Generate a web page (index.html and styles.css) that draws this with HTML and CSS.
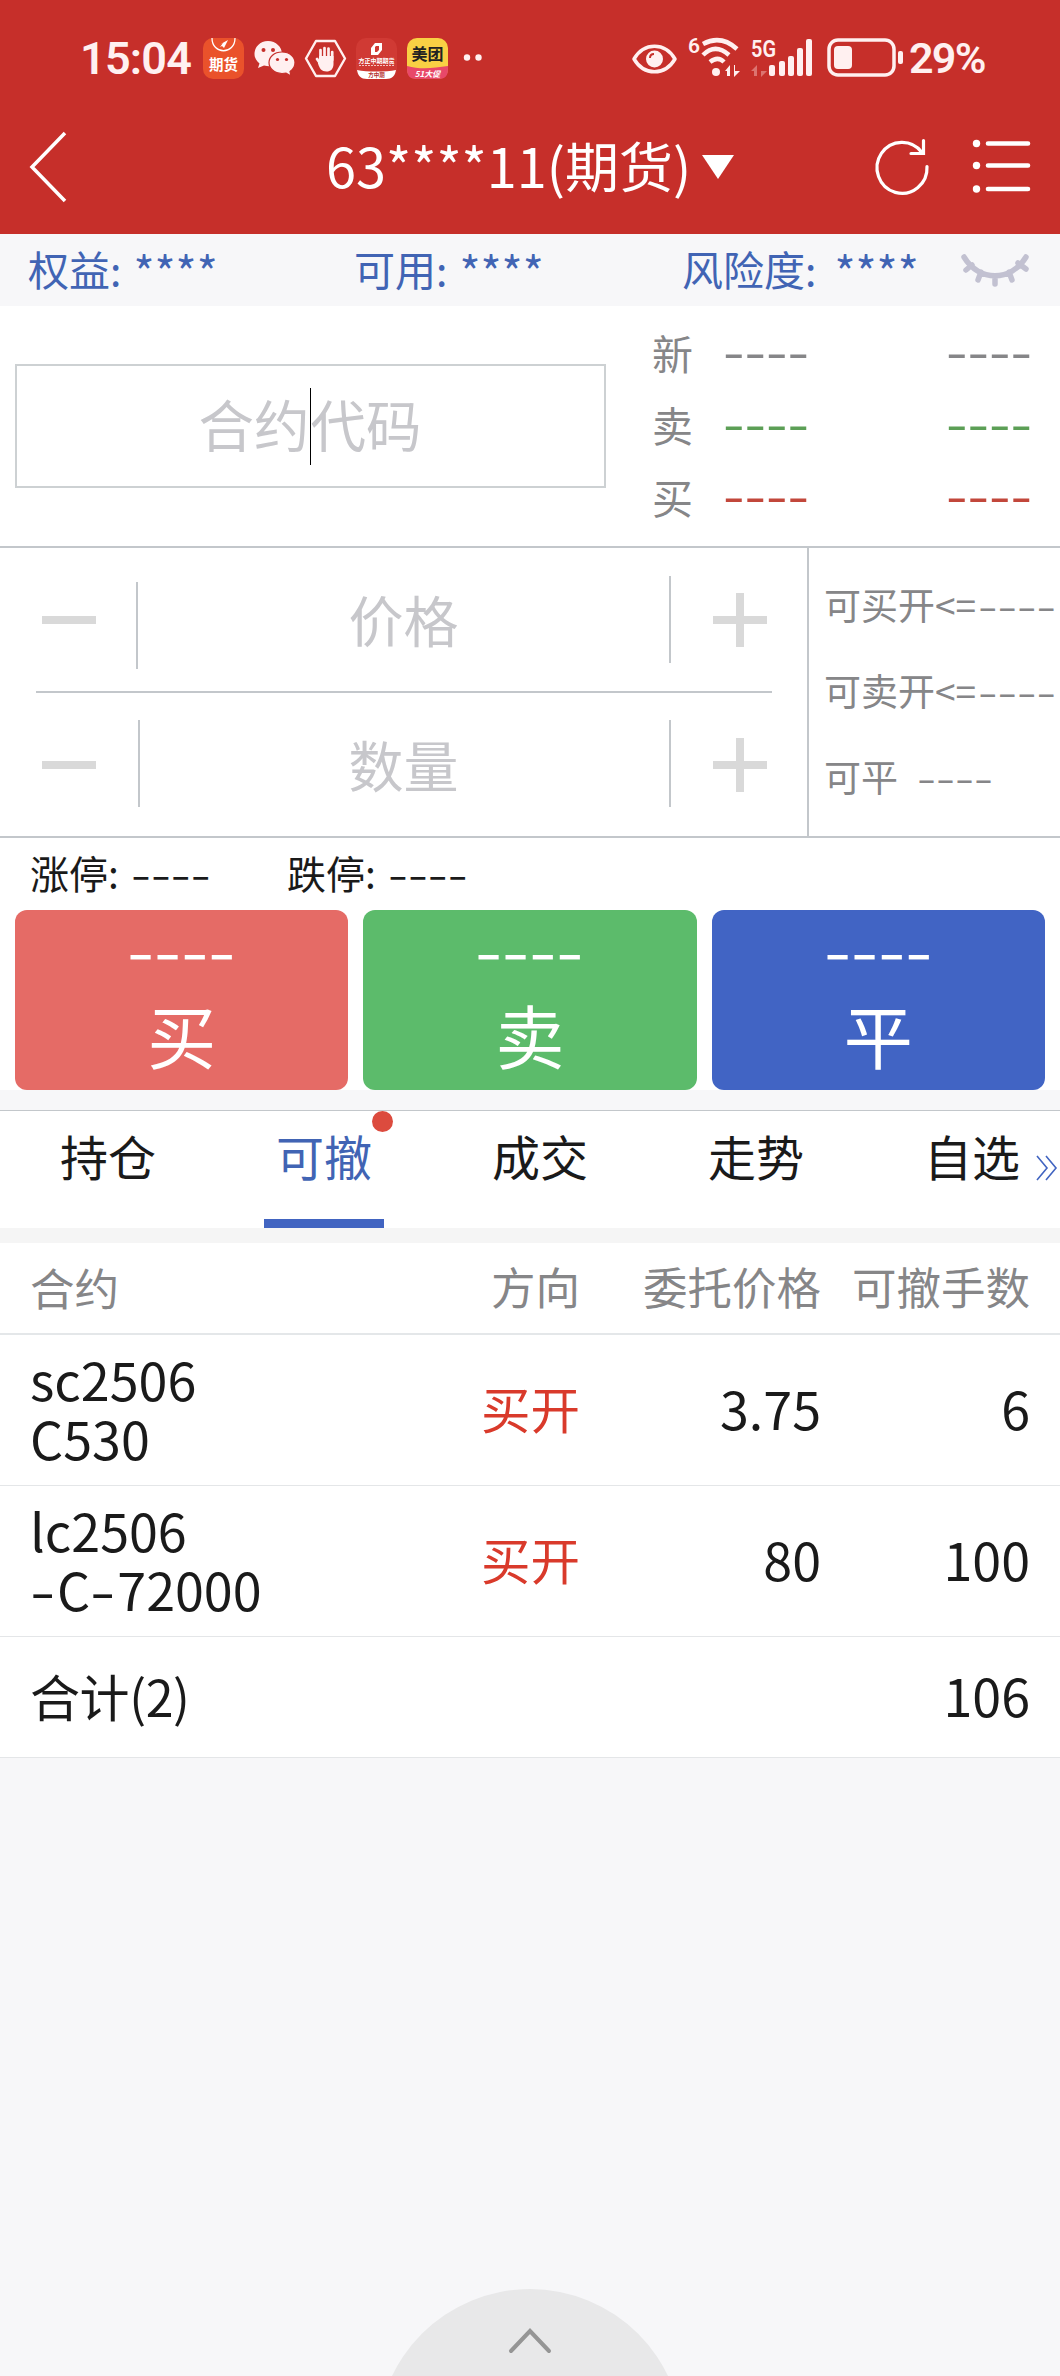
FILE: index.html
```html
<!DOCTYPE html>
<html lang="zh-CN">

<head>
    <meta charset="UTF-8">
    <meta name="viewport" content="width=device-width, initial-scale=1.0">
    <title>期货交易</title>
    <link rel="stylesheet" href="styles.css">
</head>

<body>
    <header class="header">
        <div class="status">
            <span class="status-time">15:04</span>
            <div class="status-apps">
                <svg width="41" height="41" viewBox="0 0 41 41">
                    <rect width="41" height="41" rx="10" fill="#ea522b"/>
                    <path d="M9 0C9 17 32 17 32 0" fill="none" stroke="#fff" stroke-width="1.3"/>
                    <path d="M16 7l9-5-4 8-2-2-2 1 3-4z" fill="#fff"/>
                    <text x="20.5" y="32" font-size="14.5" font-weight="700" fill="#fff" text-anchor="middle">期货</text>
                </svg>
                <svg width="41" height="41" viewBox="0 0 41 41">
                    <path d="M14 3C6 3 .5 9 .5 16c0 4 2 7 5 9.500L4 30l6-2.500c12 3 18-4 18-11.500C28 9 22 3 14 3z" fill="#fff0f0"/>
                    <path d="M28 14c-8 0-13 5-13 10.500S20 35.500 28 35.500l4-.5 5 3-1-4.500c3-2 5-5 5-9C41 19 36 14 28 14z" fill="#fff0f0" stroke="#c62f2a" stroke-width="1.200"/>
                    <g fill="#c62f2a">
                        <circle cx="9.500" cy="12" r="2"/>
                        <circle cx="19" cy="12" r="2"/>
                        <circle cx="23.500" cy="21.500" r="1.600"/>
                        <circle cx="32.500" cy="21.500" r="1.600"/>
                    </g>
                </svg>
                <svg width="41" height="41" viewBox="0 0 41 41">
                    <path d="M1 20.500L11 3h19l10 17.500L30 38H11z" fill="none" stroke="#fff0f0" stroke-width="2.400" stroke-linejoin="round"/>
                    <path d="M15.500 22V12M19.500 20V10M23.500 20V10.500M27.200 22V14M15.500 26l-3.500-5" fill="none" stroke="#fff0f0" stroke-width="2.700" stroke-linecap="round"/>
                    <path d="M14.200 18h14.300v8c0 5-3 7.500-7 7.500-5 0-7-3-8.500-8z" fill="#fff0f0"/>
                </svg>
                <svg width="41" height="41" viewBox="0 0 41 41">
                    <rect width="41" height="41" rx="10" fill="#d03a34"/>
                    <path d="M1 32c10 2 29 2 39 0-1 6-4 9-10 9H11c-6 0-9-3-10-9z" fill="#fff"/>
                    <path d="M15 10l4-5h7v7l-4 5h-7zM19 9v5h2l2-2V8h-3z" fill="#fff" fill-rule="evenodd"/>
                    <text x="20.500" y="25" font-size="6" font-weight="700" fill="#fff" text-anchor="middle">方正中期期货</text>
                    <path d="M3 27.500h35" stroke="#f3c4c0" stroke-width="1" stroke-dasharray="2 1"/>
                    <text x="20.500" y="38.500" font-size="5.500" font-weight="700" fill="#b3302b" text-anchor="middle">方中期</text>
                </svg>
                <svg width="41" height="41" viewBox="0 0 41 41">
                    <rect width="41" height="41" rx="10" fill="#f9d044"/>
                    <path d="M0 28c14 4 27 2 41 0v3c0 7-3 10-10 10H10C3 41 0 38 0 31z" fill="#e84869"/>
                    <text x="20.500" y="22" font-size="16" font-weight="700" fill="#222" text-anchor="middle">美团</text>
                    <text x="20.500" y="38.500" font-size="8" font-weight="700" font-style="italic" fill="#fff" text-anchor="middle">51大促</text>
                </svg>
            </div>
            <svg class="status-more" width="20" height="8" viewBox="0 0 20 8">
                <circle cx="4" cy="3.500" r="3.200" fill="#fff0f0"/>
                <circle cx="15.500" cy="3.500" r="3.200" fill="#fff0f0"/>
            </svg>
            <svg class="status-system" width="276" height="44" viewBox="630 36 276 44">
                <g fill="none" stroke="#fff0f0">
                    <path d="M634 59c10-17 31-17 41 0-10 17-31 17-41 0z" stroke-width="3.500" stroke-linejoin="round"/>
                    <path d="M703 44c11-6 23-5 34 5M703 55c8-8 17-8 26 0M710 62c5-4 10-4 14 0" stroke-width="4.500"/>
                    <rect x="829" y="40" width="65" height="35" rx="9" stroke-width="3.500"/>
                </g>
                <g fill="#fff0f0">
                    <circle cx="654.500" cy="59" r="8.500"/>
                    <circle cx="716" cy="72" r="4"/>
                    <path d="M725 71l5-6v11h-3v-5zM735 65v6h5l-6 6V65z"/>
                    <rect x="769" y="65" width="6" height="11" rx="2"/>
                    <rect x="779" y="61" width="6" height="15" rx="2"/>
                    <rect x="788" y="56" width="6" height="20" rx="2"/>
                    <rect x="797" y="48" width="6" height="28" rx="2"/>
                    <rect x="806" y="39" width="6" height="37" rx="2"/>
                    <rect x="834" y="46" width="18" height="23" rx="4"/>
                    <rect x="898" y="51" width="5" height="13" rx="2"/>
                </g>
                <path d="M751 71l6-6v11h-3v-5zM761 65v6h6l-6 6z" fill="#dc7470"/>
                <path d="M650 58c0-3 2-4 4-4" fill="none" stroke="#c62f2a" stroke-width="2"/>
                <text class="latin" x="688" y="53" font-size="21" fill="#fff0f0">6</text>
                <text class="latin" x="751" y="57" font-size="24" textLength="25" lengthAdjust="spacingAndGlyphs" fill="#fff0f0">5G</text>
            </svg>
            <span class="status-percent">29%</span>
        </div>
        <div class="nav">
            <svg class="nav-back" width="40" height="74" viewBox="0 0 40 74">
                <path d="M37 3L4 37l33 34" fill="none" stroke="#fff" stroke-width="3.500"/>
            </svg>
            <h1 class="nav-title">63****11(期货)</h1>
            <span class="nav-arrow"></span>
            <svg class="nav-icons" width="160" height="60" viewBox="874 137 160 60">
                <g fill="none" stroke="#fff" stroke-linecap="round">
                    <path d="M927 166.500a25 25.500 0 1 1-5-14" stroke-width="3.200"/>
                    <path d="M923.500 140.500v13H911" stroke-width="3.200"/>
                    <path d="M988 143.500h40M988 165.500h40M988 189h40" stroke-width="4.600"/>
                </g>
                <circle cx="976.500" cy="143.500" r="3.700" fill="#fff"/>
                <circle cx="976.500" cy="165.500" r="3.700" fill="#fff"/>
                <circle cx="976.500" cy="189" r="3.700" fill="#fff"/>
            </svg>
        </div>
    </header>

    <div class="summary">
        <div class="summary-item">权益: <span class="stars">****</span></div>
        <div class="summary-item">可用: <span class="stars">****</span></div>
        <div class="summary-item">风险度: <span class="stars">****</span></div>
        <svg class="summary-eye" width="70" height="36" viewBox="960 252 70 36">
            <path d="M964 257c15 25 47 25 62 0M972 265l-6 5M981 272l-3 8M995 276v8M1009 272l3 8M1018 263l8 6" fill="none" stroke="#c2c1d1" stroke-width="5.500" stroke-linecap="round"/>
        </svg>
    </div>

    <section class="contract">
        <div class="code-input"><span>合约</span><i class="caret"></i><span>代码</span></div>
        <div class="quotes">
            <div class="quote">
                <span>新</span>
                <span class="dash">----</span>
                <span class="dash">----</span>
            </div>
            <div class="quote quote-sell">
                <span>卖</span>
                <span class="dash">----</span>
                <span class="dash">----</span>
            </div>
            <div class="quote quote-buy">
                <span>买</span>
                <span class="dash">----</span>
                <span class="dash">----</span>
            </div>
        </div>
    </section>

    <section class="order">
        <div class="steppers">
            <div class="stepper stepper-price">
                <div class="minus"></div>
                <div class="field">价格</div>
                <div class="plus"></div>
            </div>
            <div class="stepper stepper-amount">
                <div class="minus"></div>
                <div class="field">数量</div>
                <div class="plus"></div>
            </div>
        </div>
        <div class="limits">
            <div>可买开&lt;=<span class="dash">----</span></div>
            <div>可卖开&lt;=<span class="dash">----</span></div>
            <div>可平<span class="dash dash-gap">----</span></div>
        </div>
    </section>

    <section class="trade">
        <div class="stops">
            <div class="stop">涨停: <span class="dash">----</span></div>
            <div class="stop">跌停: <span class="dash">----</span></div>
        </div>
        <div class="buttons">
            <div class="button button-buy"><span class="dash">----</span><b>买</b></div>
            <div class="button button-sell"><span class="dash">----</span><b>卖</b></div>
            <div class="button button-close"><span class="dash">----</span><b>平</b></div>
        </div>
    </section>

    <nav class="tabs">
        <div class="tab">持仓</div>
        <div class="tab tab-active">可撤<i class="dot"></i></div>
        <div class="tab">成交</div>
        <div class="tab">走势</div>
        <div class="tab">自选</div>
        <svg class="tabs-more" width="24" height="28" viewBox="0 0 24 28">
            <path d="M2 2l10 12L2 26M11 2l10 12-10 12" fill="none" stroke="#4164c1" stroke-width="1.600"/>
        </svg>
    </nav>

    <div class="table">
        <div class="row row-head">
            <div class="col-name">合约</div>
            <div class="col-side">方向</div>
            <div class="col-price">委托价格</div>
            <div class="col-amount">可撤手数</div>
        </div>
        <div class="row">
            <div class="col-name">sc2506<br>C530</div>
            <div class="col-side">买开</div>
            <div class="col-price">3.75</div>
            <div class="col-amount">6</div>
        </div>
        <div class="row">
            <div class="col-name">lc2506<br><span class="dash">-</span>C<span class="dash">-</span>72000</div>
            <div class="col-side">买开</div>
            <div class="col-price">80</div>
            <div class="col-amount">100</div>
        </div>
        <div class="row row-total">
            <div class="col-name">合计(2)</div>
            <div class="col-amount">106</div>
        </div>
    </div>

    <footer class="footer">
        <div class="drawer">
            <svg width="44" height="28" viewBox="0 0 44 28">
                <path d="M3 24L22 4l19 20" fill="none" stroke="#959595" stroke-width="4" stroke-linecap="round"/>
            </svg>
        </div>
    </footer>
</body>

</html>
```

FILE: styles.css
```css
* {
    box-sizing: border-box;
}

body {
    margin: 0;
    width: 1060px;
    height: 2376px;
    display: flex;
    flex-direction: column;
    overflow: hidden;
    background-color: #f7f7f9;
    color: #1a1a1a;
    font-family: "Noto Sans CJK SC", sans-serif;
    line-height: 1;
    white-space: nowrap;
}

svg {
    display: block;
    flex-shrink: 0;
    overflow: visible;
}

/* wide hyphens used as the empty value */
.dash {
    display: inline-block;
    transform: scaleX(1.5);
    transform-origin: left;
}

/* header */
.header {
    height: 234px;
    background-color: #c62f2a;
    color: white;
}

.status {
    height: 116px;
    padding-left: 80px;
    display: flex;
    align-items: center;
    color: #fff0f0;
}

.status-time,
.status-percent,
.latin {
    font-family: Roboto, sans-serif;
    font-weight: 600;
}

.status-time {
    width: 123px;
    font-size: 45px;
    letter-spacing: -0.8px;
}

.status-apps {
    display: flex;
    gap: 10px;
}

.status-more {
    margin-left: 15px;
}

.status-system {
    margin-left: 147px;
}

.status-percent {
    margin-left: 3px;
    font-size: 43px;
    letter-spacing: -1.7px;
}

.nav {
    height: 102px;
    padding: 0 26px 0 28px;
    display: flex;
    align-items: center;
}

.nav-title {
    margin: 0 0 0 258px;
    width: 366px;
    padding-bottom: 4px;
    font-size: 54px;
    font-weight: 400;
}

.nav-arrow {
    margin-left: 10px;
    border: 16px solid transparent;
    border-top: 24px solid white;
    border-bottom: 0;
}

.nav-icons {
    margin-left: auto;
}

/* account summary */
.summary {
    height: 72px;
    padding: 0 30px 0 28px;
    display: flex;
    align-items: center;
    font-size: 41px;
    color: #4164b4;
}

.summary-item {
    width: 326px;
    height: 44px;
    line-height: 41px;
    word-spacing: 3px;
}

.stars {
    font-size: 45px;
    line-height: 0;
    vertical-align: -4px;
}

.summary-item:nth-child(3) {
    width: auto;
    margin-left: 2px;
    word-spacing: 9px;
}

.summary-eye {
    margin-left: auto;
}

/* contract and quotes */
.contract {
    height: 242px;
    padding-left: 15px;
    display: flex;
    align-items: center;
    background-color: white;
    border-bottom: 2px solid #c3c7cb;
}

.code-input {
    width: 591px;
    height: 124px;
    padding-right: 1px;
    display: flex;
    align-items: center;
    justify-content: center;
    border: 2px solid #cdd1d3;
    font-size: 55.5px;
    color: #c7c7cb;
}

.code-input span {
    padding-bottom: 4px;
}

.caret {
    width: 1px;
    height: 77px;
    background-color: #000;
}

.quotes {
    margin-left: 46px;
    padding-bottom: 4px;
    display: flex;
    flex-direction: column;
    gap: 31px;
    font-size: 41px;
    color: #868688;
}

.quote {
    display: grid;
    grid-template-columns: 71px 223px 90px;
}

.quote .dash {
    margin-top: -2px;
    transform: scaleX(1.47);
    font-weight: 500;
}

.quote-sell .dash {
    color: #5c9f56;
}

.quote-buy .dash {
    color: #c2473b;
}

/* price and amount */
.order {
    height: 290px;
    display: flex;
    background-color: white;
    border-bottom: 2px solid #c3c7cb;
}

.steppers {
    width: 809px;
    padding: 0 35px 0 36px;
    border-right: 2px solid #c3c7cb;
}

.stepper {
    height: 143px;
    padding: 0 5px 0 6px;
    display: flex;
    align-items: center;
}

.stepper-price {
    height: 145px;
    border-bottom: 2px solid #c3c7cb;
}

.minus,
.plus {
    width: 54px;
    height: 54px;
    background: linear-gradient(#d9d9d9, #d9d9d9) center / 54px 8px no-repeat;
}

.plus {
    background: linear-gradient(#d9d9d9, #d9d9d9) center / 54px 8px no-repeat,
        linear-gradient(#d9d9d9, #d9d9d9) center / 8px 54px no-repeat;
}

.field {
    flex: 1;
    height: 99px;
    margin: 0 42px 0 40px;
    padding-bottom: 3px;
    display: flex;
    align-items: center;
    justify-content: center;
    background: linear-gradient(#c3c7cb, #c3c7cb) 0 6px / 2px 87px no-repeat,
        linear-gradient(#c3c7cb, #c3c7cb) right 6px / 2px 87px no-repeat;
    font-size: 55px;
    color: #c7c7cb;
}

.stepper-price .field {
    background-position: 0 12px, right 6px;
}

.stepper-amount .field {
    background-position: 2px 5px, right 5px;
}

.limits {
    padding: 38px 0 0 15px;
    display: flex;
    flex-direction: column;
    gap: 49px;
    font-size: 37px;
    color: #868688;
}

.limits .dash {
    margin-left: 2px;
    transform: scaleX(1.52);
}

.limits .dash-gap {
    margin-left: 19px;
    transform: scaleX(1.48);
}

/* trade buttons */
.trade {
    height: 252px;
    background-color: white;
}

.stops {
    height: 72px;
    padding: 0 0 4px 30px;
    display: flex;
    align-items: center;
    font-size: 39px;
}

.stop {
    width: 257px;
    word-spacing: 3px;
}

.stop .dash {
    transform: scaleX(1.47);
}

.buttons {
    padding: 0 15px;
    display: flex;
    gap: 15px;
}

.button {
    flex: 1;
    height: 180px;
    padding-top: 14px;
    display: flex;
    flex-direction: column;
    align-items: center;
    gap: 24px;
    border-radius: 12px;
    color: white;
    font-size: 52px;
}

.button .dash {
    margin-left: -1px;
    transform: scaleX(1.46);
    transform-origin: center;
    height: 52px;
    font-weight: 500;
}

.button b {
    font-size: 69px;
    font-weight: 400;
}

.button-buy {
    background-color: #e56b66;
}

.button-sell {
    background-color: #5cbb6b;
}

.button-close {
    background-color: #4164c4;
}

/* tabs */
.tabs {
    position: relative;
    height: 118px;
    margin-top: 20px;
    display: flex;
    background-color: white;
    border-top: 1px solid #c3c7cb;
}

.tab {
    position: relative;
    flex: 0 0 216px;
    padding-top: 20px;
    font-size: 48px;
    text-align: center;
}

.tab-active {
    color: #4164b4;
    background: linear-gradient(#4164c1, #4164c1) bottom / 120px 9px no-repeat;
}

.dot {
    position: absolute;
    top: 0;
    left: 156px;
    width: 21px;
    height: 21px;
    border-radius: 50%;
    background-color: #dc4b3e;
}

.tabs-more {
    position: absolute;
    top: 43px;
    right: 1px;
}

/* order table */
.table {
    background-color: white;
    border-top: 15px solid #f5f5f5;
}

.row {
    height: 151px;
    padding: 0 30px 4px 30px;
    display: flex;
    align-items: center;
    border-bottom: 1px solid #e4e6e8;
    font-size: 52px;
}

.row-head {
    height: 92px;
    border-bottom: 2px solid #e4e7e9;
    font-size: 44.5px;
    color: #868688;
}

.row-total {
    height: 121px;
}

.row-total .col-name {
    font-size: 50px;
    letter-spacing: -0.4px;
}

.col-name {
    width: 350px;
    line-height: 59px;
}

.col-name .dash {
    margin-right: 9px;
    transform: scaleX(1.4);
}

.col-side {
    width: 200px;
    text-align: right;
    color: #d93a2b;
    font-size: 49.5px;
}

.row-head .col-side {
    color: inherit;
    font-size: inherit;
}

.col-price {
    width: 241px;
    text-align: right;
}

.col-amount {
    margin-left: auto;
    text-align: right;
}

/* bottom drawer */
.footer {
    height: 87px;
    margin-top: auto;
    display: flex;
    justify-content: center;
    overflow: hidden;
}

.drawer {
    width: 306px;
    height: 306px;
    padding-top: 38px;
    display: flex;
    justify-content: center;
    border-radius: 50%;
    background-color: #e8e8e9;
}
```
